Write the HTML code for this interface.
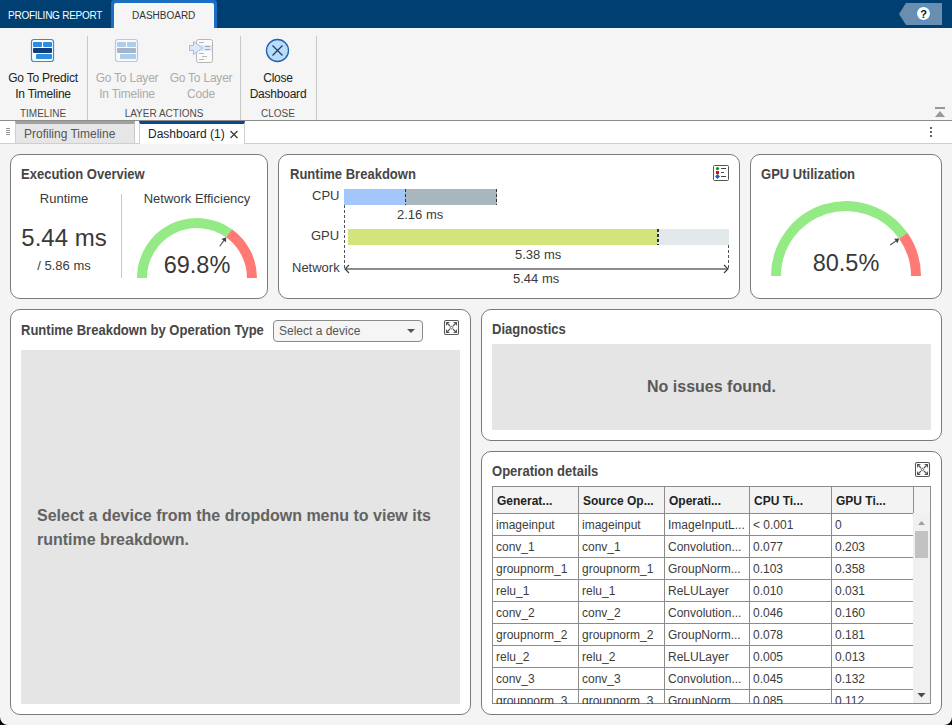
<!DOCTYPE html>
<html><head><meta charset="utf-8">
<style>
*{box-sizing:border-box;margin:0;padding:0}
html,body{width:952px;height:725px;overflow:hidden;background:#f4f4f4;font-family:"Liberation Sans",sans-serif;color:#333}
.a{position:absolute}
.t{position:absolute;white-space:nowrap;line-height:1}
.c{text-align:center}
#topbar{left:0;top:0;width:952px;height:28px;background:#003f72}
#strip{left:0;top:28px;width:952px;height:92px;background:#f5f5f5}
.sep{position:absolute;top:36px;width:1px;height:84px;background:#c9c9c9}
#docbar{left:0;top:120px;width:952px;height:24px;background:#fff;border-top:1px solid #8c8c8c;border-bottom:1px solid #cfcfcf}
.panel{position:absolute;background:#fff;border:1px solid #7a7a7a;border-radius:10px}
.ph{font-weight:bold;font-size:14px;color:#464646;transform:scaleX(0.93);transform-origin:0 0}
.gray{position:absolute;background:#e5e5e5}
.bt{font-size:12px;color:#222;letter-spacing:-0.22px}
.dis{color:#ababab}
.gl{font-size:10px;color:#4d4d4d}
.lb{font-size:13px;color:#3a3a3a}
.th{font-size:12px;font-weight:bold;color:#222}
.td{font-size:12px;color:#3c3c3c}
svg{position:absolute;left:0;top:0}
</style></head><body>
<div id="topbar" class="a"></div>
<div class="t" style="left:8px;top:11px;font-size:10px;color:#fff;letter-spacing:-0.25px">PROFILING REPORT</div>
<div class="a" style="left:111px;top:0;width:106px;height:28px;background:#1b6ec2;border-radius:3px 3px 0 0"></div>
<div class="a" style="left:114px;top:3px;width:100px;height:25px;background:#f5f5f5;border-radius:2px 2px 0 0"></div>
<div class="t" style="left:132px;top:11px;font-size:10px;color:#333">DASHBOARD</div>
<!-- help -->
<svg width="952" height="28" style="left:0;top:0">
<path d="M899 14 L906 3 H942 V25 H906 Z" fill="#6a8eb0"/>
<circle cx="923.5" cy="13.5" r="7" fill="#fff" stroke="#2a8ae0" stroke-width="1"/>
<text x="923.5" y="18" font-family="Liberation Sans" font-weight="bold" font-size="11" text-anchor="middle" fill="#111">?</text>
</svg>

<div id="strip" class="a"></div>
<div class="sep" style="left:87px"></div>
<div class="sep" style="left:240px"></div>
<div class="sep" style="left:316px"></div>

<svg width="952" height="120" style="left:0;top:0">
<!-- icon 1 -->
<rect x="31.5" y="39.5" width="22" height="22" rx="2.5" fill="#fff" stroke="#2b8ce0" stroke-width="1.2"/>
<rect x="33" y="42" width="9" height="5" rx="1" fill="#2b8ce0"/>
<rect x="43" y="42" width="9" height="5" rx="1" fill="#2b8ce0"/>
<rect x="33" y="48" width="19" height="5" rx="1" fill="#0f3f7a"/>
<rect x="36" y="54" width="16" height="5" rx="1" fill="#2b8ce0"/>
<!-- icon 2 disabled -->
<rect x="115.5" y="39.5" width="22" height="22" rx="2.5" fill="#fafafa" stroke="#a9cdee" stroke-width="1.2"/>
<rect x="117" y="42" width="9" height="5" rx="1" fill="#a9cdea"/>
<rect x="127" y="42" width="9" height="5" rx="1" fill="#a9cdea"/>
<rect x="117" y="48" width="19" height="5" rx="1" fill="#a3b4cc"/>
<rect x="120" y="54" width="16" height="5" rx="1" fill="#a9cdea"/>
<!-- icon 3 disabled code -->
<rect x="196.5" y="39.5" width="16" height="23" rx="2" fill="#fafafa" stroke="#b5b5b5" stroke-width="1"/>
<rect x="197" y="45" width="15" height="6" fill="#dde9f6"/>
<path d="M189.5 45.5 H193.5 V41.5 L202.5 48 L193.5 54.5 V50.5 H189.5 Z" fill="#dde9f6" stroke="#9ebde0" stroke-width="1"/>
<path d="M199 42.5 H204 M205 46.5 H210 M205 49.5 H210 M199 53.5 H204 M202 56.5 H207 M199 59.5 H204" stroke="#b0b0b0" stroke-width="0.9"/>
<path d="M205 46.5 H210 M205 49.5 H210" stroke="#9aa8bb" stroke-width="0.9"/>
<!-- close -->
<circle cx="277.5" cy="50.5" r="11" fill="#b8dcfa" stroke="#1f5fb5" stroke-width="1.3"/>
<path d="M272.5 45.5 L282.5 55.5 M282.5 45.5 L272.5 55.5" stroke="#1a3a6a" stroke-width="1.2"/>
<!-- collapse -->
<rect x="935" y="107" width="10" height="2" fill="#999"/>
<path d="M935 117 L940 111 L945 117 Z" fill="#999"/>
</svg>

<div class="t bt c" style="left:-7px;width:100px;top:72px">Go To Predict</div>
<div class="t bt c" style="left:-7px;width:100px;top:88px">In Timeline</div>
<div class="t gl c" style="left:-7px;width:100px;top:109px">TIMELINE</div>
<div class="t bt dis c" style="left:77px;width:100px;top:72px">Go To Layer</div>
<div class="t bt dis c" style="left:77px;width:100px;top:88px">In Timeline</div>
<div class="t bt dis c" style="left:151px;width:100px;top:72px">Go To Layer</div>
<div class="t bt dis c" style="left:151px;width:100px;top:88px">Code</div>
<div class="t gl c" style="left:114px;width:100px;top:109px">LAYER ACTIONS</div>
<div class="t bt c" style="left:228px;width:100px;top:72px">Close</div>
<div class="t bt c" style="left:228px;width:100px;top:88px">Dashboard</div>
<div class="t gl c" style="left:228px;width:100px;top:109px">CLOSE</div>

<div id="docbar" class="a"></div>
<div class="a" style="left:15px;top:121px;width:120px;height:22px;background:#e6e6e6;border-top:3px solid #a0a0a0;border-right:1px solid #c8c8c8;border-left:1px solid #d0d0d0"></div>
<div class="t" style="left:24px;top:128px;font-size:12px;color:#555">Profiling Timeline</div>
<div class="a" style="left:139px;top:121px;width:106px;height:23px;background:#fff;border-top:3px solid #0a4a8a;border-left:1px solid #d0d0d0;border-right:1px solid #d0d0d0"></div>
<div class="t" style="left:148px;top:128px;font-size:12px;color:#222">Dashboard (1)</div>
<svg width="952" height="150" style="left:0;top:0">
<path d="M230.5 131 L237.5 138 M237.5 131 L230.5 138" stroke="#333" stroke-width="1.1"/>
<path d="M6 128.5 H10 M6 130.5 H10 M6 132.5 H10 M6 134.5 H10" stroke="#777" stroke-width="0.8"/>
<rect x="930" y="127" width="2" height="2" fill="#666"/>
<rect x="930" y="131" width="2" height="2" fill="#666"/>
<rect x="930" y="135" width="2" height="2" fill="#666"/>
</svg>
<div class="panel" style="left:10px;top:154px;width:258px;height:145px"></div>
<div class="panel" style="left:278px;top:154px;width:462px;height:145px"></div>
<div class="panel" style="left:750px;top:154px;width:192px;height:145px"></div>
<div class="panel" style="left:10px;top:309px;width:461px;height:406px"></div>
<div class="panel" style="left:481px;top:309px;width:461px;height:132px"></div>
<div class="panel" style="left:481px;top:451px;width:461px;height:264px"></div>

<div class="t ph" style="left:21px;top:167px">Execution Overview</div>
<div class="t ph" style="left:290px;top:167px">Runtime Breakdown</div>
<div class="t ph" style="left:761px;top:167px">GPU Utilization</div>
<div class="t ph" style="left:21px;top:323px">Runtime Breakdown by Operation Type</div>
<div class="t ph" style="left:492px;top:322px">Diagnostics</div>
<div class="t ph" style="left:492px;top:464px">Operation details</div>

<!-- exec overview -->
<div class="t lb c" style="left:14px;width:100px;top:192px">Runtime</div>
<div class="t lb c" style="left:143px;width:108px;top:192px">Network Efficiency</div>
<div class="a" style="left:121px;top:194px;width:1px;height:84px;background:#c8c8c8"></div>
<div class="t c" style="left:14px;width:100px;top:226px;font-size:24px;color:#383838">5.44 ms</div>
<div class="t c" style="left:14px;width:100px;top:259px;font-size:13px;color:#3a3a3a">/ 5.86 ms</div>
<div class="t c" style="left:147px;width:100px;top:254px;font-size:23.5px;color:#383838">69.8%</div>

<svg width="952" height="725" style="left:0;top:0">
<path d="M142 278 A 55 55 0 0 1 229.05 233.30" fill="none" stroke="#94eb85" stroke-width="10"/>
<path d="M229.05 233.30 A 55 55 0 0 1 252 278" fill="none" stroke="#ff7a75" stroke-width="10"/>
<path d="M219.72 246.30 L224.5 239.6" fill="none" stroke="#555" stroke-width="1.1"/><path d="M226.13 237.37 L226.08 242.36 L221.42 239.02 Z" fill="#444"/>
<path d="M776 276 A 70 70 0 0 1 903.27 235.75" fill="none" stroke="#94eb85" stroke-width="10"/>
<path d="M903.27 235.75 A 70 70 0 0 1 916 276" fill="none" stroke="#ff7a75" stroke-width="10"/>
<path d="M890.18 244.95 L897 240.2" fill="none" stroke="#555" stroke-width="1.1"/><path d="M899.18 238.62 L897.48 243.33 L894.18 238.63 Z" fill="#444"/>

<!-- runtime breakdown bars -->
<rect x="344" y="189" width="61" height="16" fill="#a3c6fd"/>
<rect x="405" y="189" width="92" height="16" fill="#a8b7be"/>
<path d="M405.5 189 V205 M496.5 189 V205" stroke="#333" stroke-width="1" stroke-dasharray="3 2"/>
<rect x="348" y="229" width="310" height="16" fill="#d3e47c"/>
<rect x="658" y="229" width="71" height="16" fill="#e3e8eb"/>
<path d="M658 229 V245" stroke="#333" stroke-width="2" stroke-dasharray="3 2"/>
<path d="M344.5 205 V268 M728.5 245 V268" stroke="#555" stroke-width="1" stroke-dasharray="3 2"/>
<path d="M345 269 H728" stroke="#666" stroke-width="1.5"/>
<path d="M349 265 L345 269 L349 273 M724 265 L728 269 L724 273" fill="none" stroke="#444" stroke-width="1.2"/>
<!-- legend icon -->
<rect x="713.5" y="165.5" width="15" height="15" rx="1" fill="#fff" stroke="#555" stroke-width="1"/>
<circle cx="717.5" cy="168.5" r="1.6" fill="#118811"/>
<rect x="716" y="171" width="3" height="3" fill="#c01818"/>
<path d="M717.5 174 L720 176.5 L717.5 179 L715 176.5 Z" fill="#1d5fb8"/>
<path d="M721 168.5 H726 M721 172.5 H724 M721 176.5 H726" stroke="#444" stroke-width="1"/>
<!-- expand icons -->
<rect x="444.5" y="320.5" width="14" height="14" rx="1.5" fill="#fff" stroke="#585858" stroke-width="1.1"/>
<path d="M446 322 L450 322 Q447.3 323.3 446 326 Z M457 322 L453 322 Q455.7 323.3 457 326 Z M446 333 L450 333 Q447.3 331.7 446 329 Z M457 333 L453 333 Q455.7 331.7 457 329 Z" fill="#555"/>
<path d="M447.5 323.5 L450 326 M455.5 323.5 L453 326 M447.5 331.5 L450 329 M455.5 331.5 L453 329" stroke="#555" stroke-width="1.1"/>
<circle cx="451.5" cy="327.5" r="1.2" fill="none" stroke="#555" stroke-width="0.9"/>
<rect x="915.5" y="462.5" width="14" height="14" rx="1.5" fill="#fff" stroke="#585858" stroke-width="1.1"/>
<path d="M917 464 L921 464 Q918.3 465.3 917 468 Z M928 464 L924 464 Q926.7 465.3 928 468 Z M917 475 L921 475 Q918.3 473.7 917 471 Z M928 475 L924 475 Q926.7 473.7 928 471 Z" fill="#555"/>
<path d="M918.5 465.5 L921 468 M926.5 465.5 L924 468 M918.5 473.5 L921 471 M926.5 473.5 L924 471" stroke="#555" stroke-width="1.1"/>
<circle cx="922.5" cy="469.5" r="1.2" fill="none" stroke="#555" stroke-width="0.9"/>
</svg>

<div class="t lb" style="left:312px;top:189px;font-size:13px">CPU</div>
<div class="t lb" style="left:311px;top:229px;font-size:13px">GPU</div>
<div class="t lb" style="left:292px;top:261px;font-size:13px">Network</div>
<div class="t lb" style="left:397px;top:208px;font-size:13px">2.16 ms</div>
<div class="t lb" style="left:515px;top:248px;font-size:13px">5.38 ms</div>
<div class="t lb" style="left:513px;top:272px;font-size:13px">5.44 ms</div>

<div class="t c" style="left:796px;width:100px;top:252px;font-size:23.5px;color:#383838">80.5%</div>

<!-- op type -->
<div class="a" style="left:273px;top:320px;width:150px;height:22px;background:#f5f5f5;border:1px solid #8a8a8a;border-radius:4px"></div>
<div class="t" style="left:279px;top:325px;font-size:12px;color:#555">Select a device</div>
<svg width="952" height="725" style="left:0;top:0"><path d="M407 329 H415 L411 333 Z" fill="#555"/></svg>
<div class="gray" style="left:21px;top:350px;width:439px;height:354px"></div>
<div class="t" style="left:37px;top:504px;font-size:16px;font-weight:bold;color:#626262;line-height:24px;white-space:normal;width:420px">Select a device from the dropdown menu to view its runtime breakdown.</div>

<div class="gray" style="left:492px;top:344px;width:439px;height:86px"></div>
<div class="t c" style="left:492px;width:439px;top:379px;font-size:16px;font-weight:bold;color:#5a5a5a">No issues found.</div>

<div class="a" style="left:492px;top:486px;width:439px;height:218px;overflow:hidden">
<div class="a" style="left:0;top:0;width:439px;height:218px;background:#fff;border:1px solid #8c8c8c"></div>
<div class="a" style="left:1px;top:1px;width:437px;height:27px;background:#f3f3f3;border-bottom:1px solid #8c8c8c"></div>
<div class="a" style="left:1px;top:49px;width:421px;height:1px;background:#8c8c8c"></div>
<div class="a" style="left:1px;top:71px;width:421px;height:1px;background:#8c8c8c"></div>
<div class="a" style="left:1px;top:93px;width:421px;height:1px;background:#8c8c8c"></div>
<div class="a" style="left:1px;top:115px;width:421px;height:1px;background:#8c8c8c"></div>
<div class="a" style="left:1px;top:137px;width:421px;height:1px;background:#8c8c8c"></div>
<div class="a" style="left:1px;top:159px;width:421px;height:1px;background:#8c8c8c"></div>
<div class="a" style="left:1px;top:181px;width:421px;height:1px;background:#8c8c8c"></div>
<div class="a" style="left:1px;top:203px;width:421px;height:1px;background:#8c8c8c"></div>
<div class="a" style="left:86px;top:1px;width:1px;height:216px;background:#8c8c8c"></div>
<div class="a" style="left:172px;top:1px;width:1px;height:216px;background:#8c8c8c"></div>
<div class="a" style="left:257px;top:1px;width:1px;height:216px;background:#8c8c8c"></div>
<div class="a" style="left:339px;top:1px;width:1px;height:216px;background:#8c8c8c"></div>
<div class="a" style="left:421px;top:1px;width:1px;height:216px;background:#8c8c8c"></div>
<div class="t th" style="left:5px;top:9px">Generat...</div>
<div class="t th" style="left:91px;top:9px">Source Op...</div>
<div class="t th" style="left:177px;top:9px">Operati...</div>
<div class="t th" style="left:262px;top:9px">CPU Ti...</div>
<div class="t th" style="left:344px;top:9px">GPU Ti...</div>
<div class="t td" style="left:4px;top:33px">imageinput</div>
<div class="t td" style="left:90px;top:33px">imageinput</div>
<div class="t td" style="left:176px;top:33px">ImageInputL...</div>
<div class="t td" style="left:261px;top:33px">&lt; 0.001</div>
<div class="t td" style="left:343px;top:33px">0</div>
<div class="t td" style="left:4px;top:55px">conv_1</div>
<div class="t td" style="left:90px;top:55px">conv_1</div>
<div class="t td" style="left:176px;top:55px">Convolution...</div>
<div class="t td" style="left:261px;top:55px">0.077</div>
<div class="t td" style="left:343px;top:55px">0.203</div>
<div class="t td" style="left:4px;top:77px">groupnorm_1</div>
<div class="t td" style="left:90px;top:77px">groupnorm_1</div>
<div class="t td" style="left:176px;top:77px">GroupNorm...</div>
<div class="t td" style="left:261px;top:77px">0.103</div>
<div class="t td" style="left:343px;top:77px">0.358</div>
<div class="t td" style="left:4px;top:99px">relu_1</div>
<div class="t td" style="left:90px;top:99px">relu_1</div>
<div class="t td" style="left:176px;top:99px">ReLULayer</div>
<div class="t td" style="left:261px;top:99px">0.010</div>
<div class="t td" style="left:343px;top:99px">0.031</div>
<div class="t td" style="left:4px;top:121px">conv_2</div>
<div class="t td" style="left:90px;top:121px">conv_2</div>
<div class="t td" style="left:176px;top:121px">Convolution...</div>
<div class="t td" style="left:261px;top:121px">0.046</div>
<div class="t td" style="left:343px;top:121px">0.160</div>
<div class="t td" style="left:4px;top:143px">groupnorm_2</div>
<div class="t td" style="left:90px;top:143px">groupnorm_2</div>
<div class="t td" style="left:176px;top:143px">GroupNorm...</div>
<div class="t td" style="left:261px;top:143px">0.078</div>
<div class="t td" style="left:343px;top:143px">0.181</div>
<div class="t td" style="left:4px;top:165px">relu_2</div>
<div class="t td" style="left:90px;top:165px">relu_2</div>
<div class="t td" style="left:176px;top:165px">ReLULayer</div>
<div class="t td" style="left:261px;top:165px">0.005</div>
<div class="t td" style="left:343px;top:165px">0.013</div>
<div class="t td" style="left:4px;top:187px">conv_3</div>
<div class="t td" style="left:90px;top:187px">conv_3</div>
<div class="t td" style="left:176px;top:187px">Convolution...</div>
<div class="t td" style="left:261px;top:187px">0.045</div>
<div class="t td" style="left:343px;top:187px">0.132</div>
<div class="t td" style="left:4px;top:209px">groupnorm_3</div>
<div class="t td" style="left:90px;top:209px">groupnorm_3</div>
<div class="t td" style="left:176px;top:209px">GroupNorm...</div>
<div class="t td" style="left:261px;top:209px">0.085</div>
<div class="t td" style="left:343px;top:209px">0.112</div>
<div class="a" style="left:421px;top:27px;width:17px;height:190px;background:#f0f0f0"></div>
<div class="a" style="left:423px;top:45px;width:13px;height:27px;background:#c2c2c2"></div>
</div>
<svg width="952" height="725" style="left:0;top:0"><path d="M918 525 L921.5 521 L925 525 Z" fill="#a0a0a0"/><path d="M917.5 693 H925.5 L921.5 697.5 Z" fill="#4a4a4a"/></svg><svg width="952" height="725" style="left:0;top:0"><path d="M0 717 A 8 8 0 0 0 8 725 L0 725 Z" fill="#000"/><path d="M952 717 A 8 8 0 0 1 944 725 L952 725 Z" fill="#000"/></svg>
</body></html>
